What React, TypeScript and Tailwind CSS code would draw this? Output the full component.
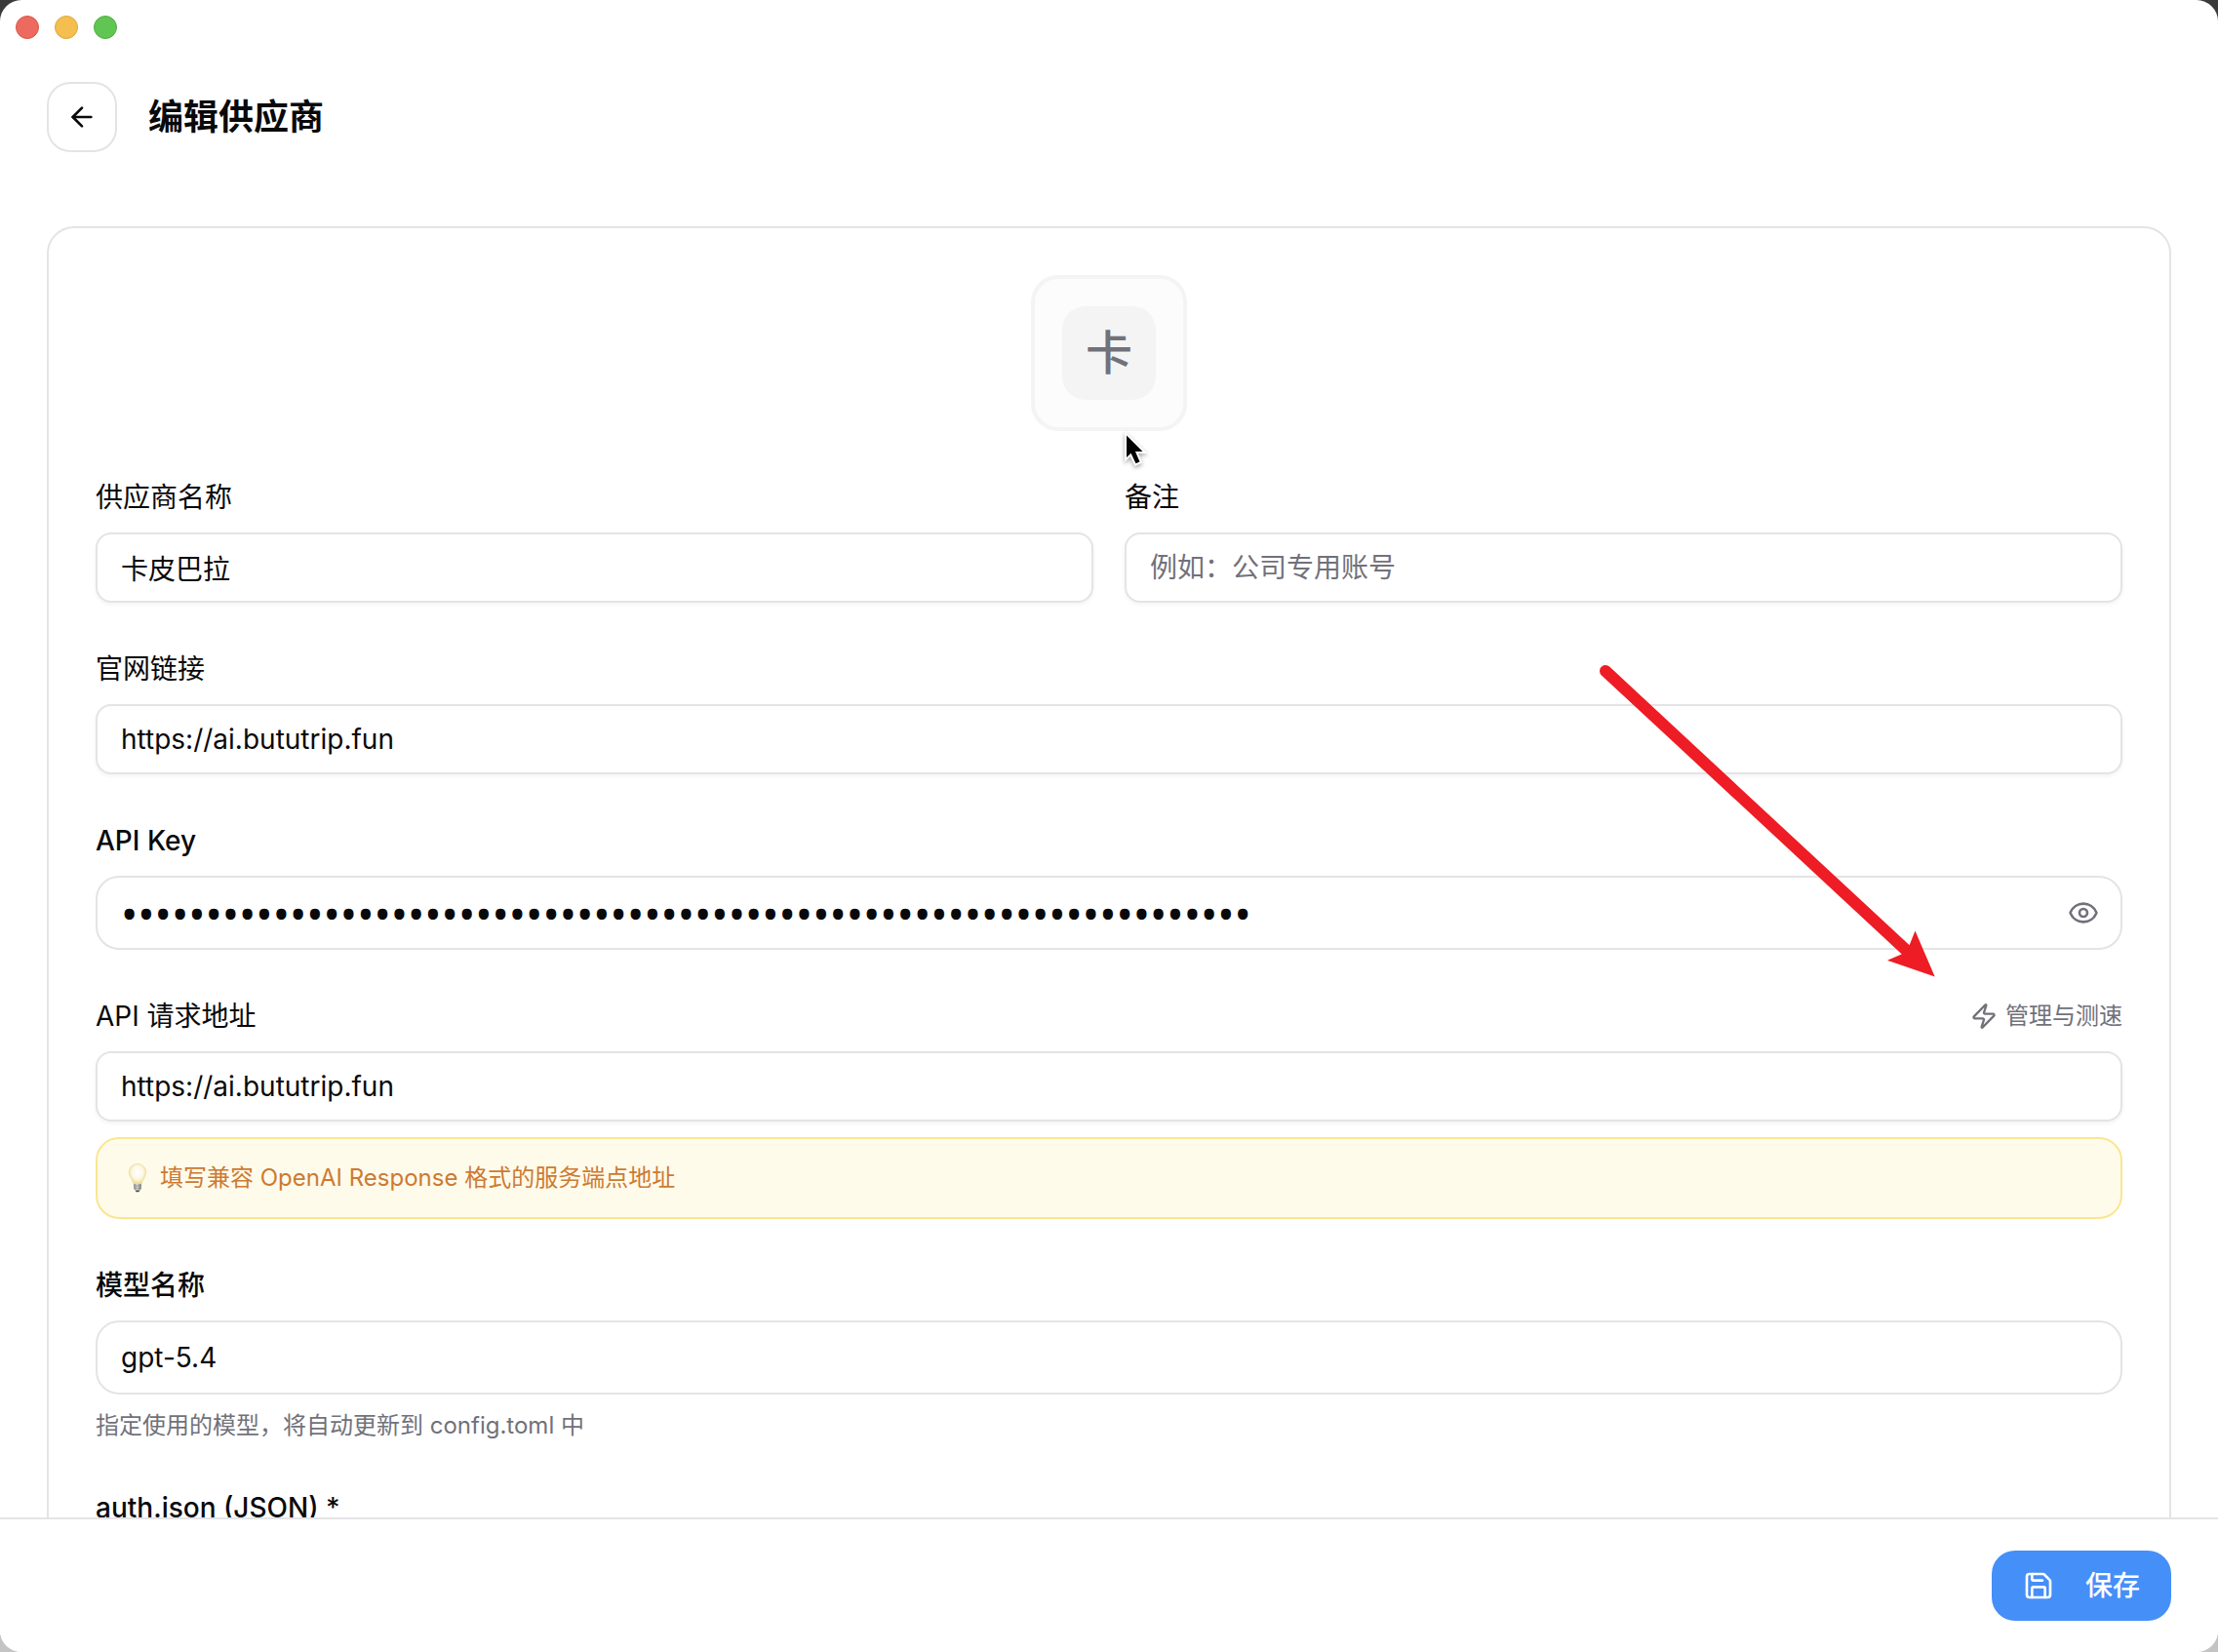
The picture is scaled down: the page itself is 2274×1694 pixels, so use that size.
import type { InputHTMLAttributes, ReactNode } from "react";
import { ArrowLeft, Eye, Save, Zap } from "lucide-react";

const API_KEY = "sk-" + "0123456789abcdef".repeat(4);

type FieldProps = {
  id: string;
  label: string;
  medium?: boolean;
  action?: ReactNode;
  children: ReactNode;
};

function Field({ id, label, medium, action, children }: FieldProps) {
  return (
    <div className="flex min-w-0 flex-col gap-4">
      <div className="flex items-center justify-between">
        <label htmlFor={id} className={medium ? "text-[28px] leading-10 font-medium" : "text-[28px] leading-10"}>
          {label}
        </label>
        {action}
      </div>
      {children}
    </div>
  );
}

function TextInput(props: InputHTMLAttributes<HTMLInputElement>) {
  return (
    <input
      type="text"
      {...props}
      className="h-[72px] w-full rounded-2xl border-2 border-[#e4e4e7] bg-white px-6 text-[28px] shadow-[0_2px_4px_rgba(0,0,0,0.05)] outline-none placeholder:text-[#71717a]"
    />
  );
}

function RoundInput({ type = "text", ...props }: InputHTMLAttributes<HTMLInputElement>) {
  return (
    <input
      type={type}
      {...props}
      className={
        type === "password"
          ? "h-[76px] w-full rounded-3xl border-2 border-[#e4e4e7] bg-white pr-20 pl-6 font-['Noto_Sans',sans-serif] text-[46px] outline-none"
          : "h-[76px] w-full rounded-3xl border-2 border-[#e4e4e7] bg-white px-6 text-[28px] outline-none"
      }
    />
  );
}

function Bulb() {
  return (
    <svg viewBox="0 0 32 32" className="size-8 shrink-0" aria-hidden="true">
      <defs>
        <radialGradient id="glass" cx="50%" cy="42%" r="55%">
          <stop offset="0" stopColor="#ffffff" />
          <stop offset="0.6" stopColor="#fbf8e4" />
          <stop offset="1" stopColor="#f0dd92" />
        </radialGradient>
        <linearGradient id="base" x1="0" x2="1">
          <stop offset="0" stopColor="#8d8d88" />
          <stop offset="0.45" stopColor="#dededb" />
          <stop offset="1" stopColor="#7d7d79" />
        </linearGradient>
      </defs>
      <path
        d="M17 1.500c-4.900 0-8.700 3.800-8.700 8.600 0 3.200 1.600 5.300 2.900 7.600.9 1.600 1.500 3 1.800 4.600h8c.3-1.600.9-3 1.800-4.600 1.300-2.300 2.900-4.400 2.900-7.600 0-4.800-3.800-8.600-8.700-8.600Z"
        fill="url(#glass)"
        stroke="#ecdc9c"
        strokeWidth="0.8"
      />
      <path d="M13.200 22h7.600v5l-1.200 1.600h-5.200L13.200 27Z" fill="url(#base)" />
      <path d="M13.200 24h7.600M13.400 26.300h7.200" stroke="#77777a" strokeWidth="0.6" />
      <path d="M14.600 28.400h4.800l-1 1.800h-2.800Z" fill="#4a4a4a" />
    </svg>
  );
}

function Pointer() {
  return (
    <svg
      viewBox="0 0 28 40"
      className="pointer-events-none absolute top-full left-24 h-10 w-7 drop-shadow-[0_2px_2px_rgba(0,0,0,0.35)]"
      aria-hidden="true"
    >
      <path
        d="M2 4.500v22.500l4.500-4.300 5 10.600 4-1.800-4.500-10.500h7.500Z"
        fill="#000"
        stroke="#fff"
        strokeWidth="4"
        strokeLinejoin="miter"
        paintOrder="stroke"
      />
    </svg>
  );
}

function RedArrow() {
  return (
    <svg
      viewBox="0 0 346 324"
      className="pointer-events-none absolute top-[680px] right-[288px] h-[324px] w-[346px]"
      aria-hidden="true"
    >
      <path d="M6 8 315 295" stroke="#ee1c24" strokeWidth="12" strokeLinecap="round" />
      <path d="M343.700 321.500 323.500 274.500 317.500 289.500 309.500 298.500 295 304.700Z" fill="#ee1c24" />
    </svg>
  );
}

export default function App() {
  return (
    <div className="h-screen bg-linear-to-b from-[#3a3a3a] to-[#c4c4c4]">
      <div className="relative flex h-full flex-col overflow-hidden rounded-[22px] bg-white font-['Inter','Noto_Sans_CJK_SC',sans-serif] text-[#09090b]">
        <div className="flex gap-4 p-4">
          <button type="button" aria-label="关闭" className="size-6 rounded-full border border-[#d9574d] bg-[#ed6a5e]" />
          <button type="button" aria-label="最小化" className="size-6 rounded-full border border-[#dca53f] bg-[#f5bf4f]" />
          <button type="button" aria-label="缩放" className="size-6 rounded-full border border-[#51ae42] bg-[#61c554]" />
        </div>

        <header className="flex items-center gap-8 px-12 py-7">
          <button
            type="button"
            aria-label="返回"
            className="flex size-[72px] items-center justify-center rounded-3xl border-2 border-[#e4e4e7]"
          >
            <ArrowLeft className="size-8" />
          </button>
          <h1 className="text-[36px] leading-[48px] font-semibold">编辑供应商</h1>
        </header>

        <main className="min-h-0 flex-1 overflow-hidden px-12 pt-12">
          <form className="flex flex-col gap-12 rounded-[28px] border-2 border-[#e4e4e7] p-12">
            <div className="flex justify-center">
              <div className="relative">
                <button
                  type="button"
                  className="flex size-40 items-center justify-center rounded-[28px] border-4 border-[#f4f4f4] bg-[#fcfcfc]"
                >
                  <span className="flex size-24 items-center justify-center rounded-3xl bg-[#f4f4f4] text-[48px] leading-none font-medium text-[#71717a]">
                    卡
                  </span>
                </button>
                <Pointer />
              </div>
            </div>

            <div className="grid grid-cols-2 gap-8">
              <Field id="name" label="供应商名称">
                <TextInput id="name" defaultValue="卡皮巴拉" />
              </Field>
              <Field id="note" label="备注">
                <TextInput id="note" placeholder="例如：公司专用账号" />
              </Field>
            </div>

            <Field id="site" label="官网链接">
              <TextInput id="site" defaultValue="https://ai.bututrip.fun" />
            </Field>

            <Field id="key" label="API Key" medium>
              <div className="relative">
                <RoundInput id="key" type="password" defaultValue={API_KEY} />
                <button
                  type="button"
                  aria-label="显示 API Key"
                  className="absolute inset-y-0 right-6 flex items-center text-[#71717a]"
                >
                  <Eye className="size-8" />
                </button>
              </div>
            </Field>

            <Field
              id="endpoint"
              label="API 请求地址"
              action={
                <button type="button" className="flex items-center gap-2 text-[24px] leading-8 text-[#71717a]">
                  <Zap className="size-7" />
                  管理与测速
                </button>
              }
            >
              <TextInput id="endpoint" defaultValue="https://ai.bututrip.fun" />
              <p className="flex items-center gap-2 rounded-3xl border-2 border-[#fae690] bg-[#fffbeb] p-6 text-[24px] leading-8 text-[#cd7a32]">
                <Bulb />
                填写兼容 OpenAI Response 格式的服务端点地址
              </p>
            </Field>

            <Field id="model" label="模型名称" medium>
              <RoundInput id="model" defaultValue="gpt-5.4" />
              <p className="text-[24px] leading-8 text-[#71717a]">指定使用的模型，将自动更新到 config.toml 中</p>
            </Field>

            <Field id="auth" label="auth.json (JSON) *" medium>
              <textarea id="auth" rows={6} className="w-full rounded-2xl border-2 border-[#e4e4e7] p-6" />
            </Field>
          </form>
        </main>

        <footer className="flex shrink-0 justify-end border-t-2 border-[#e4e4e7] bg-white px-12 py-8">
          <button
            type="button"
            className="flex h-[72px] items-center gap-8 rounded-3xl bg-[#458ff8] px-8 text-[28px] leading-10 font-medium text-white"
          >
            <Save className="size-8" />
            保存
          </button>
        </footer>

        <RedArrow />
      </div>
    </div>
  );
}
